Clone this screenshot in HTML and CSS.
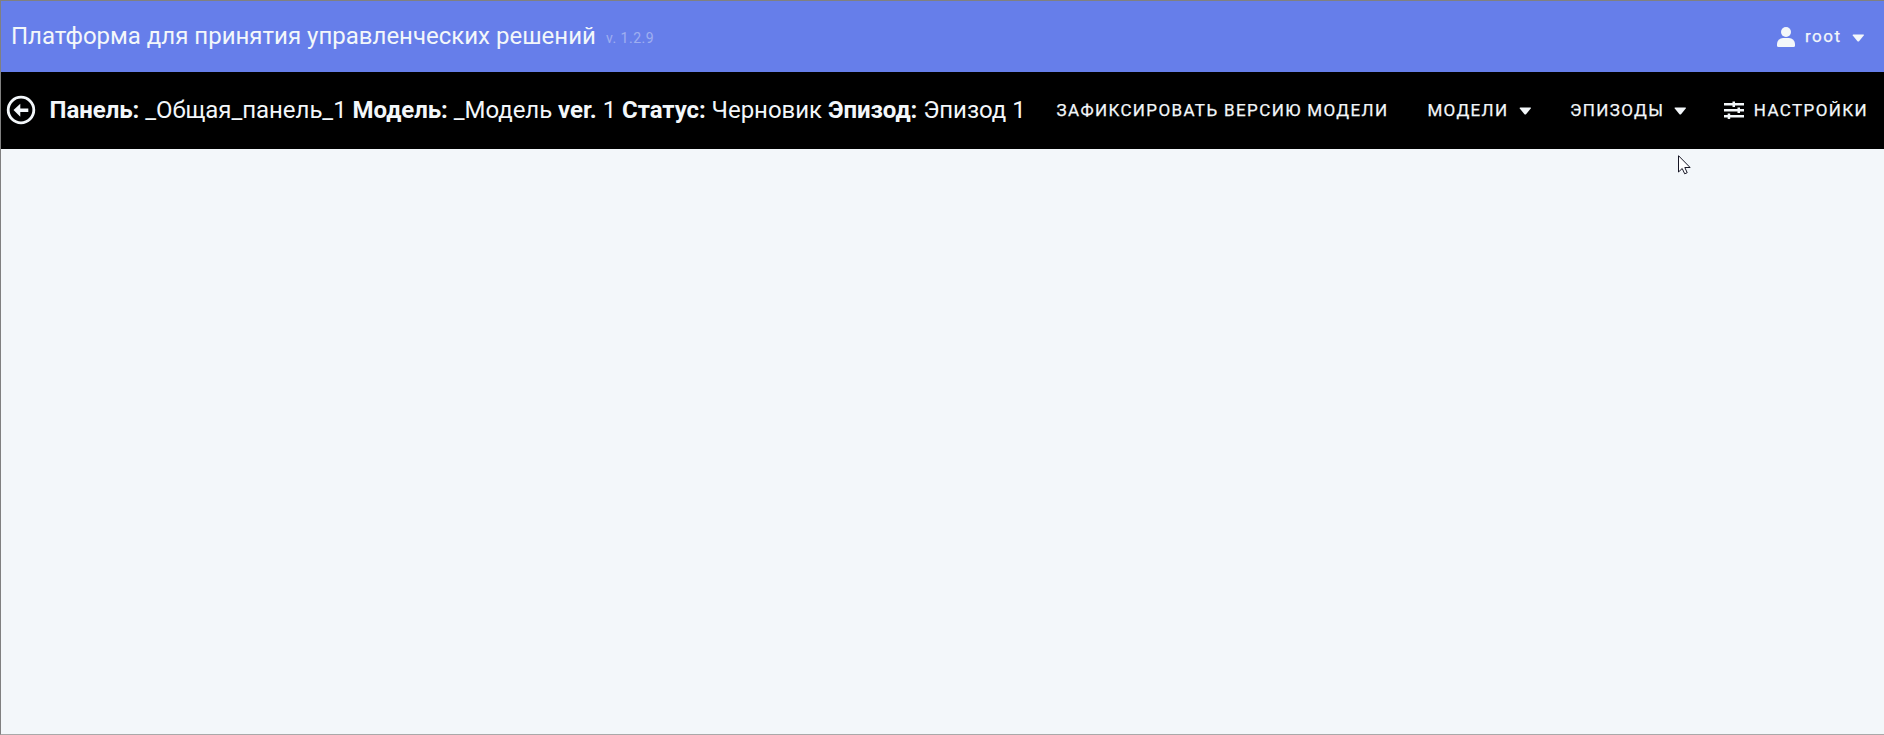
FILE: index.html
```html
<!DOCTYPE html>
<html lang="ru">
<head>
<meta charset="utf-8">
<title>Платформа для принятия управленческих решений</title>
<link rel="stylesheet" href="styles.css">
</head>
<body>
<div class="app">
  <header class="topbar">
    <div class="brand">Платформа для принятия управленческих решений</div>
    <div class="version">v. 1.2.9</div>
    <div class="user">
      <svg class="user-icon" viewBox="0 0 18 20"><circle cx="9" cy="5" r="5"/><path d="M6 11h6a6 6 0 0 1 6 6v1.500a1.500 1.500 0 0 1-1.500 1.500h-15a1.500 1.500 0 0 1-1.500-1.500v-1.500a6 6 0 0 1 6-6z"/></svg>
      <span class="user-name">root</span>
      <svg class="caret" viewBox="0 0 12 8"><path d="M1 0.500h10q1.200 0 .5 1l-4.500 5.500q-1 1-2 0l-4.500-5.500q-.7-1 .5-1z"/></svg>
    </div>
  </header>
  <nav class="toolbar">
    <svg class="back" viewBox="0 0 30 30"><circle cx="15" cy="15" r="12.800" fill="none" stroke="currentColor" stroke-width="2.800"/><path d="M7.500 15l6.800-6.300v4.700h8v3.600h-8v4.700z"/></svg>
    <div class="crumbs"><b>Панель:</b> _Общая_панель_1 <b>Модель:</b> _Модель <b>ver.</b> 1 <b>Статус:</b> Черновик <b>Эпизод:</b> Эпизод 1</div>
    <div class="actions">
      <span class="action">ЗАФИКСИРОВАТЬ ВЕРСИЮ МОДЕЛИ</span>
      <span class="action models">МОДЕЛИ<svg class="caret" viewBox="0 0 12 8"><path d="M1 0.500h10q1.200 0 .5 1l-4.500 5.500q-1 1-2 0l-4.500-5.500q-.7-1 .5-1z"/></svg></span>
      <span class="action episodes">ЭПИЗОДЫ<svg class="caret" viewBox="0 0 12 8"><path d="M1 0.500h10q1.200 0 .5 1l-4.500 5.500q-1 1-2 0l-4.500-5.500q-.7-1 .5-1z"/></svg></span>
      <span class="action settings"><svg class="sliders" viewBox="0 0 20 18"><path d="M0 2h20v2.500H0zM0 8h20v2.500H0zM0 14h20v2.500H0zM8.500.6h2.500v5.300h-2.500zM13.500 6.600h2.500v5.300h-2.500zM3.700 12.600h2.500v5.300h-2.500z"/></svg>НАСТРОЙКИ</span>
    </div>
  </nav>
  <main class="canvas"></main>
</div>
<svg class="pointer" viewBox="0 0 13 20"><path d="M.5.7v16.300l3.700-3.500 2.500 5.300 2.500-1.100-2.400-5.200h5.300z"/></svg>
</body>
</html>
```
FILE: styles.css
```css
* { box-sizing: border-box; }
body { margin: 0; font-family: Roboto, sans-serif; color: #f3f7fa; }
svg { display: block; flex: none; fill: currentColor; }
.app { display: flex; flex-direction: column; height: 735px; border: 1px solid #808080; border-right: 0; border-bottom-color: #a9a9a9; background: #f3f7fa; }
.topbar { display: flex; align-items: center; height: 71px; padding: 0 20px 0 10px; background: #667eea; white-space: nowrap; }
.brand { font-size: 24px; line-height: 30px; margin-bottom: 2px; }
.version { margin: 3px 0 0 10px; font-size: 14px; letter-spacing: .5px; opacity: .4; }
.user { display: flex; align-items: center; margin-left: auto; }
.user-icon { width: 18px; height: 20px; margin: 1px 9.500px 0 0; }
.user-name { font-size: 17px; letter-spacing: 1.500px; margin-bottom: 2px; -webkit-text-stroke: .25px currentColor; }
.caret { width: 12.500px; height: 8px; margin: 2px 0 0 10px; }
.toolbar { display: flex; align-items: center; height: 77px; padding: 0 16px 2px 5px; background: #000; white-space: nowrap; }
.back { width: 30px; height: 30px; margin: 0 13.500px 0 0; }
.crumbs { font-size: 24px; line-height: 30px; letter-spacing: -.045px; }
.crumbs b { font-weight: 700; }
.actions { display: flex; align-items: center; margin-left: auto; }
.action { display: flex; align-items: center; font-size: 17px; letter-spacing: 1.370px; line-height: 24px; -webkit-text-stroke: .25px currentColor; }
.action .caret { margin-top: 3px; }
.models { margin-left: 39px; }
.episodes { margin-left: 39px; }
.settings { margin-left: 37px; }
.sliders { width: 20px; height: 18px; margin: 1px 10px 0 0; }
.canvas { flex: 1; }
.pointer { position: absolute; left: 1678px; top: 155px; width: 13px; height: 20px; fill: #fff; stroke: #161625; stroke-width: 1; }
```
